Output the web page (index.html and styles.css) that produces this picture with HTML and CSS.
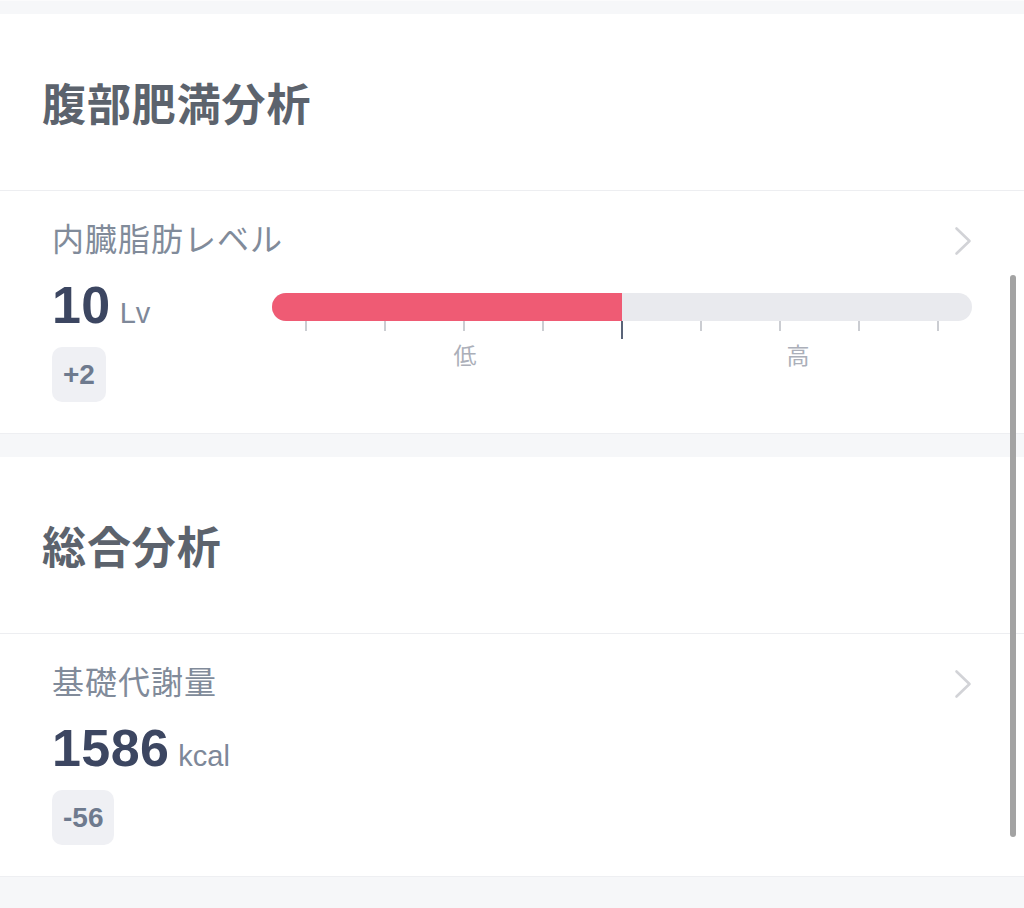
FILE: index.html
```html
<!DOCTYPE html>
<html lang="ja">
<head>
<meta charset="utf-8">
<title>分析</title>
<link rel="stylesheet" href="styles.css">
</head>
<body>
<div class="page">
  <div class="gap gap-top"></div>
  <section class="card">
    <div class="card-head"><h2 class="card-title">腹部肥満分析</h2></div>
    <div class="metric">
      <div class="metric-top">
        <span class="metric-label">内臓脂肪レベル</span>
        <svg class="chevron" width="18" height="30" viewBox="0 0 18 30"><path d="M2.5 2.5 L15.5 15 L2.5 27.5" fill="none" stroke="#d2d3d7" stroke-width="2.6" stroke-linecap="round" stroke-linejoin="round"/></svg>
      </div>
      <div class="metric-body">
        <div class="metric-left">
          <div class="value"><span class="num">10</span><span class="unit">Lv</span></div>
          <div class="badge">+2</div>
        </div>
        <div class="scale">
          <div class="track"><div class="fill" style="width:50%"></div></div>
          <div class="ticks">
            <span class="tick"></span><span class="tick"></span><span class="tick"></span><span class="tick"></span>
            <span class="tick tick-cur"></span>
            <span class="tick"></span><span class="tick"></span><span class="tick"></span><span class="tick"></span>
          </div>
          <div class="scale-labels">
            <span class="scale-label lo">低</span>
            <span class="scale-label hi">高</span>
          </div>
        </div>
      </div>
    </div>
  </section>
  <div class="gap gap-mid"></div>
  <section class="card">
    <div class="card-head"><h2 class="card-title">総合分析</h2></div>
    <div class="metric">
      <div class="metric-top">
        <span class="metric-label">基礎代謝量</span>
        <svg class="chevron" width="18" height="30" viewBox="0 0 18 30"><path d="M2.5 2.5 L15.5 15 L2.5 27.5" fill="none" stroke="#d2d3d7" stroke-width="2.6" stroke-linecap="round" stroke-linejoin="round"/></svg>
      </div>
      <div class="metric-body">
        <div class="metric-left">
          <div class="value"><span class="num">1586</span><span class="unit">kcal</span></div>
          <div class="badge">-56</div>
        </div>
      </div>
    </div>
  </section>
  <div class="gap gap-bottom"></div>
</div>
<div class="scrollbar"></div>
</body>
</html>
```
FILE: styles.css
```css
html, body {
  margin: 0;
  padding: 0;
}
body {
  background: #f6f7f9;
  font-family: "Noto Sans CJK JP", "Liberation Sans", sans-serif;
  width: 1024px;
  height: 908px;
  overflow: hidden;
  position: relative;
}
.page {
  display: flex;
  flex-direction: column;
}
.gap {
  background: #f6f7f9;
}
.gap-top {
  height: 13px;
  border-top: 1px solid #fbfbfc;
}
.gap-mid {
  height: 23px;
}
.gap-bottom {
  height: 40px;
}
.card {
  background: #fff;
  border-bottom: 1px solid #eeeff2;
}
.card-head {
  height: 176px;
  display: flex;
  align-items: center;
  padding-left: 42px;
  border-bottom: 1px solid #edeef1;
}
.card-title {
  margin: 0;
  font-size: 44px;
  font-weight: 700;
  color: #5c636d;
  line-height: 1;
  letter-spacing: 0.9px;
}
.metric {
  padding: 26px 52px 30px 52px;
  height: 186px;
}
.metric-top {
  display: flex;
  align-items: center;
  justify-content: space-between;
  height: 40px;
}
.metric-label {
  font-size: 32px;
  line-height: 40px;
  color: #818b9a;
  letter-spacing: 1px;
}
.chevron {
  display: block;
  margin-top: 8px;
}
.metric-body {
  display: flex;
  margin-top: 22px;
}
.metric-left {
  width: 220px;
  flex: none;
}
.value {
  display: flex;
  align-items: baseline;
  gap: 9px;
  height: 52px;
}
.num {
  font-family: "Liberation Sans", Arial, sans-serif;
  font-weight: 700;
  font-size: 52px;
  line-height: 52px;
  color: #3c4661;
  letter-spacing: 0.4px;
}
.unit {
  font-family: "Liberation Sans", Arial, sans-serif;
  font-size: 29px;
  color: #7e8899;
}
.badge {
  display: inline-block;
  margin-top: 16px;
  height: 55px;
  line-height: 55px;
  padding: 0 11px;
  border-radius: 10px;
  background: #eff0f4;
  color: #6e7a8e;
  font-family: "Liberation Sans", Arial, sans-serif;
  font-weight: 700;
  font-size: 28px;
}
.scale {
  width: 700px;
  margin-top: 14px;
}
.track {
  height: 28px;
  border-radius: 14px;
  background: #e9eaee;
  overflow: hidden;
}
.fill {
  height: 100%;
  background: #ef5b74;
}
.ticks {
  display: flex;
  justify-content: space-between;
  align-items: flex-start;
  padding: 0 33px;
  height: 18px;
}
.tick {
  display: block;
  width: 2px;
  height: 10px;
  background: #cbcdd2;
}
.tick-cur {
  height: 18px;
  background: #5a6478;
}
.scale-labels {
  position: relative;
  height: 30px;
}
.scale-label {
  position: absolute;
  top: 0;
  font-size: 23px;
  line-height: 30px;
  color: #abafb9;
  transform: translateX(-50%);
}
.scale-label.lo {
  left: 193px;
}
.scale-label.hi {
  left: 526px;
}
.scrollbar {
  position: absolute;
  left: 1010px;
  top: 275px;
  width: 6px;
  height: 562px;
  border-radius: 3px;
  background: #a3a3a3;
}
```
